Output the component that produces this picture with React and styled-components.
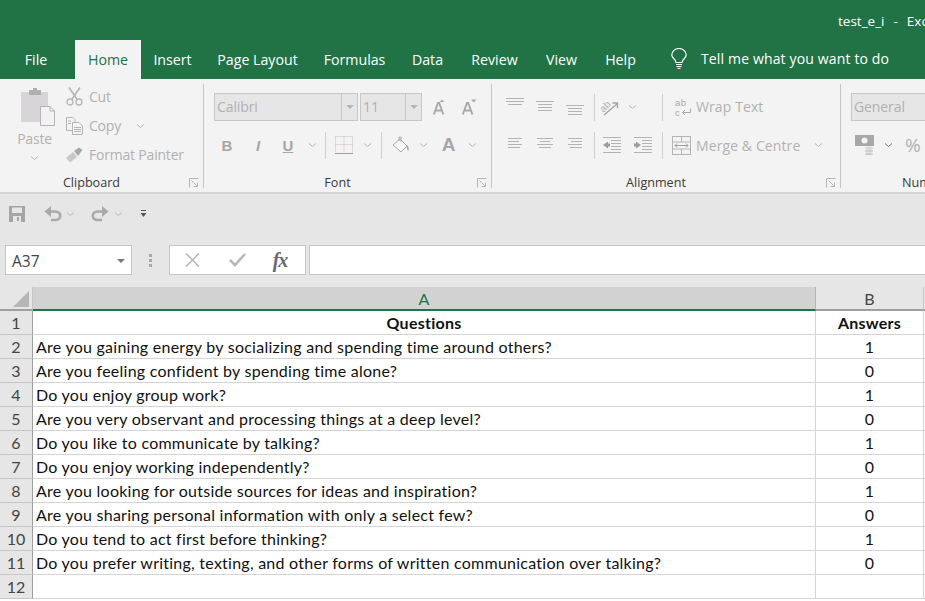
import styled, { createGlobalStyle } from "styled-components";

const GlobalStyle = createGlobalStyle`
    html, body {
        margin: 0;
        padding: 0;
        height: 100%;
        overflow: hidden;
        background: #e6e6e6;
    }
    * { box-sizing: border-box; }
`;

const UI_FONT = `"Open Sans", "Noto Sans", sans-serif`;
const CELL_FONT = `Lato, "Open Sans", sans-serif`;
const GREEN = "#217346";
const DIM = "#b1b1b1";

const Page = styled.div`
    width: 925px;
    height: 601px;
    overflow: hidden;
    display: flex;
    flex-direction: column;
    font-family: ${UI_FONT};
`;

/* title + tabs */
const TitleBar = styled.div`
    height: 40px;
    flex: none;
    background: ${GREEN};
    color: #fff;
    font-size: 13.5px;
    word-spacing: 1px;
    line-height: 43px;
    padding-left: 838px;
    white-space: pre;
    overflow: hidden;
`;

const TabBar = styled.div`
    height: 39px;
    flex: none;
    background: ${GREEN};
    display: flex;
    padding-left: ${(p) => p.$left}px;
`;

const Tab = styled.div`
    width: ${(p) => p.$w}px;
    flex: none;
    text-align: center;
    font-size: 14.2px;
    line-height: 40px;
    white-space: nowrap;
    color: ${(p) => (p.$active ? GREEN : "#fff")};
    background: ${(p) => (p.$active ? "#f3f3f3" : "transparent")};
`;

const TellMe = styled.div`
    display: flex;
    align-items: center;
    gap: 14px;
    margin-left: 21px;
    color: #fff;
    font-size: 14px;
    letter-spacing: 0.15px;
    height: 39px;
    padding-bottom: 3px;
`;

/* ribbon */
const Ribbon = styled.div`
    height: 115px;
    flex: none;
    background: #f3f3f3;
    border-bottom: 2px solid #d4d4d4;
    display: flex;
    padding-top: 5px;
    overflow: hidden;
`;

const Group = styled.div`
    position: relative;
    width: ${(p) => p.$w}px;
    flex: none;
    height: 104px;
    border-right: 1px solid #c6c6c6;
    padding-left: ${(p) => p.$pad || 0}px;
`;

const GroupBody = styled.div`
    height: 89px;
    display: flex;
`;

const GroupLabel = styled.div`
    height: 20px;
    margin-left: -${(p) => p.$pad || 0}px;
    padding-right: 20px;
    text-align: center;
    font-size: 12.6px;
    line-height: 20px;
    color: #3a3a3a;
    white-space: nowrap;
`;

const Launcher = styled.svg`
    position: absolute;
    right: 4px;
    bottom: 0;
    width: 10px;
    height: 10px;
`;

const PasteColumn = styled.div`
    width: 46px;
    margin-left: 13px;
    flex: none;
    display: flex;
    flex-direction: column;
    align-items: center;
    color: ${DIM};
    font-size: 14px;
    letter-spacing: -0.2px;
    padding-top: 4px;
    padding-left: 3px;
`;

const PasteLabel = styled.div`
    line-height: 18px;
    margin: 4px 0 7px -6px;
`;

const ClipList = styled.div`
    margin: -2px 0 0 7px;
    display: flex;
    flex-direction: column;
`;

const ClipRow = styled.div`
    height: 29px;
    flex: none;
    display: flex;
    align-items: center;
    gap: 6px;
    color: ${DIM};
    font-size: 14px;
    letter-spacing: -0.2px;
    white-space: nowrap;
`;

const IconBox = styled.div`
    width: ${(p) => p.$w}px;
    margin-left: ${(p) => p.$ml || 0}px;
    flex: none;
    display: flex;
    align-items: center;
    justify-content: center;
    color: ${DIM};
`;

const ChevronMark = styled.svg`
    width: 9px;
    height: 6px;
    flex: none;
    margin-left: ${(p) => p.$ml || 0}px;
`;

const Stack = styled.div`
    display: flex;
    flex-direction: column;
    gap: 10px;
    padding-top: 9px;
`;

const Row = styled.div`
    height: 28px;
    display: flex;
    align-items: center;
`;

const Combo = styled.div`
    width: ${(p) => p.$w}px;
    height: 28px;
    flex: none;
    display: flex;
    background: #e6e6e6;
    border: 1px solid #c6c6c6;
    margin-right: ${(p) => p.$mr || 0}px;
    color: ${DIM};
    font-size: 14px;
    letter-spacing: -0.1px;
    line-height: 26px;
    padding-left: 2px;
    overflow: hidden;
`;

const ComboText = styled.div`
    flex: 1;
    white-space: nowrap;
`;

const ComboArrow = styled.div`
    width: 16px;
    flex: none;
    border-left: 1px solid #c6c6c6;
    display: flex;
    align-items: center;
    justify-content: center;
`;

const Caret = styled.div`
    width: 0;
    height: 0;
    border-left: 4px solid transparent;
    border-right: 4px solid transparent;
    border-top: 4px solid ${(p) => p.$color || "#b5b5b5"};
`;

const VSep = styled.div`
    width: 1px;
    height: 27px;
    flex: none;
    background: #d0d0d0;
    margin-left: ${(p) => p.$left ?? 0}px;
`;

const BoldLetter = styled.div`
    width: ${(p) => p.$w}px;
    margin-left: ${(p) => p.$ml || 0}px;
    flex: none;
    text-align: center;
    color: #a6a6a6;
    font-family: "Liberation Sans", sans-serif;
    font-size: ${(p) => p.$size || 15}px;
    font-weight: 700;
    font-style: ${(p) => (p.$italic ? "italic" : "normal")};
    text-decoration: ${(p) => (p.$under ? "underline" : "none")};
`;

const DimLabel = styled.div`
    color: ${DIM};
    font-size: ${(p) => p.$size || 14}px;
    letter-spacing: 0.1px;
    white-space: nowrap;
    margin-left: ${(p) => p.$left || 0}px;
    padding-bottom: ${(p) => p.$raise || 0}px;
`;

/* quick access */
const QuickBar = styled.div`
    height: 42px;
    flex: none;
    display: flex;
    align-items: center;
    padding-left: 9px;
    padding-bottom: 2px;
`;

const UndoSvg = styled.svg`
    width: 18px;
    height: 16px;
    transform: ${(p) => (p.$flip ? "scaleX(-1)" : "none")};
`;

/* formula bar */
const FormulaBar = styled.div`
    height: 30px;
    flex: none;
    margin-top: 9px;
    display: flex;
    padding-left: 5px;
`;

const NameBox = styled.div`
    width: 127px;
    flex: none;
    background: #fff;
    border: 1px solid #c6c6c6;
    display: flex;
    align-items: center;
    justify-content: space-between;
    padding: 1px 6px 0;
    font-size: 15.5px;
    color: #444;
`;

const Grip = styled.div`
    width: 37px;
    flex: none;
    display: flex;
    flex-direction: column;
    align-items: center;
    justify-content: center;
    gap: 2px;
    span {
        width: 3px;
        height: 3px;
        background: #a8a8a8;
    }
`;

const FxBox = styled.div`
    width: 137px;
    flex: none;
    background: #fff;
    border: 1px solid #c6c6c6;
    display: flex;
    align-items: center;
`;

const FxGlyph = styled.div`
    font-family: "Liberation Serif", serif;
    font-style: italic;
    font-weight: 700;
    font-size: 20px;
    letter-spacing: -1px;
    color: #6a6a6a;
    width: 40px;
    text-align: center;
`;

const FormulaInput = styled.div`
    flex: 1;
    margin-left: 3px;
    background: #fff;
    border: 1px solid #c6c6c6;
    border-right: none;
`;

/* sheet */
const Sheet = styled.div`
    margin-top: 12px;
    display: grid;
    grid-template-columns: 33px 783px 108px 1fr;
    grid-auto-rows: 24px;
    font-family: ${CELL_FONT};
    font-variant-ligatures: none;
    flex: 1;
    background: #fff;
    overflow: hidden;
`;

const Corner = styled.div`
    background: #e6e6e6;
    border-right: 1px solid #c6c6c6;
    border-bottom: 2px solid #9f9f9f;
    display: flex;
    justify-content: flex-end;
    align-items: flex-end;
    padding: 0 3px 2px 0;
`;

const ColHead = styled.div`
    background: ${(p) => (p.$selected ? "#d2d2d2" : "#e6e6e6")};
    color: ${(p) => (p.$selected ? GREEN : "#444")};
    border-right: 1px solid ${(p) => (p.$selected ? "#b5b5b5" : "#c6c6c6")};
    border-bottom: 2px solid ${(p) => (p.$selected ? GREEN : "#9f9f9f")};
    text-align: center;
    font-size: 16px;
    line-height: 23px;
`;

const RowHead = styled.div`
    background: #e6e6e6;
    border-right: 1px solid #9f9f9f;
    border-bottom: 1px solid #c6c6c6;
    color: #444;
    font-size: 16px;
    line-height: 24px;
    text-align: center;
`;

const Cell = styled.div`
    border-right: 1px solid #d4d4d4;
    border-bottom: 1px solid #d4d4d4;
    color: #111;
    font-size: 16px;
    letter-spacing: 0.25px;
    line-height: 24px;
    white-space: nowrap;
    padding-left: ${(p) => (p.$center ? 0 : 3)}px;
    text-align: ${(p) => (p.$center ? "center" : "left")};
    font-weight: ${(p) => (p.$bold ? 700 : 400)};
`;

const Chevron = ({ ml = 0, color = "#b5b5b5" }) => (
    <ChevronMark $ml={ml} viewBox="0 0 9 6">
        <path d="M1 1.5 L4.5 4.5 L8 1.5" fill="none" stroke={color} strokeWidth="1" />
    </ChevronMark>
);

const LauncherIcon = () => (
    <Launcher viewBox="0 0 10 10">
        <path d="M0.5 9.5 V0.5 H9.5 M2.5 2.5 L8 8 M8.5 4.5 V8.5 H4.5" fill="none" stroke="#b5b5b5" />
    </Launcher>
);

const AlignIcon = ({ lines }) => (
    <svg width="19" height="20" viewBox="0 0 19 20">
        {lines.map(([y, x1, x2]) => (
            <line key={y} x1={x1} x2={x2} y1={y + 0.5} y2={y + 0.5} stroke="#b3b3b3" />
        ))}
    </svg>
);

// y, x1, x2 of each rule, measured from the 20px tall icon box
const alignTop = [[1, 0, 18], [4, 0, 18], [7, 2, 16]];
const alignMiddle = [[4, 0, 18], [7, 2, 16], [10, 2, 16], [13, 2, 16]];
const alignBottom = [[8, 0, 18], [11, 2, 16], [14, 2, 16], [17, 2, 16]];
const textLeft = [[3, 2, 16], [6, 2, 13], [9, 2, 16], [12, 2, 14]];
const textCenter = [[3, 1, 17], [6, 4, 14], [9, 1, 17], [12, 3, 15]];
const textRight = [[3, 2, 16], [6, 5, 16], [9, 2, 16], [12, 4, 16]];

const PasteIcon = () => (
    <svg width="34" height="38" viewBox="0 0 34 38">
        <rect x="0" y="4" width="27" height="30" rx="1" fill="#d8d5d8" />
        <path d="M8 4 V2 H12 V0 H16 V2 H20 V7 H8 Z" fill="#b0aeb0" />
        <path d="M19.5 18.5 H29 L33.5 23 V37.5 H19.5 Z" fill="#f3f1f4" stroke="#b5b3b5" />
        <path d="M29 18.5 V23 H33.5" fill="none" stroke="#b5b3b5" />
    </svg>
);

const CutIcon = () => (
    <svg width="17" height="19" viewBox="0 0 17 19">
        <path d="M3 0.5 L11 12 M14 0.5 L6 12" stroke="#b5b5b5" strokeWidth="1.6" fill="none" />
        <circle cx="4" cy="15" r="3" fill="none" stroke="#b5b5b5" strokeWidth="1.3" />
        <circle cx="13" cy="15" r="3" fill="none" stroke="#b5b5b5" strokeWidth="1.3" />
    </svg>
);

const CopyIcon = () => (
    <svg width="17" height="18" viewBox="0 0 17 18">
        <path d="M0.5 0.5 H7 L9 2.5 V13.5 H0.5 Z" fill="#f3f3f3" stroke="#b5b5b5" />
        <path d="M6.5 5.5 H13 L16.5 9 V17.5 H6.5 Z" fill="#f3f3f3" stroke="#b5b5b5" />
        <path d="M8 10.5 H15 M8 12.5 H15 M8 14.5 H15 M2 4 H5 M2 6.5 H5" stroke="#b5b5b5" />
    </svg>
);

const BrushIcon = () => (
    <svg width="17" height="16" viewBox="0 0 17 16">
        <path d="M0 11 L7 5 L11 10 L4 15.5 Z" fill="#c8c8c8" />
        <path d="M8 4 L13 0.5 L16.5 3 L12 9 Z" fill="#a8a8a8" />
    </svg>
);

const GrowIcon = ({ down }) => (
    <svg width="15" height="16" viewBox="0 0 15 16">
        <path d="M0.8 15.5 L5 4 H6.2 L10.4 15.5 M2.5 11.5 H8.7" fill="none" stroke="#a9a9a9" strokeWidth="1.9" />
        <path d={down ? "M9 0.5 H14.5 L11.75 3.5 Z" : "M6.5 3 L9 0.5 L11.5 3 Z"} fill="#a9a9a9" />
    </svg>
);

const BorderIcon = () => (
    <svg width="18" height="18" viewBox="0 0 18 18">
        <path d="M0.5 0.5 H17.5 V16.5 M0.5 0.5 V16.5 M9 0.5 V16.5 M0.5 8.5 H17.5" fill="none" stroke="#cdb8cd" strokeDasharray="1 1" />
        <path d="M0 17.5 H18" stroke="#9d9d9d" />
    </svg>
);

const BucketIcon = () => (
    <svg width="18" height="18" viewBox="0 0 18 18">
        <path d="M1 9 L8 3 L15 10 L9 16 Z" fill="#f7f7f7" stroke="#a8a8a8" />
        <path d="M7 5 V1 H9 V6" fill="none" stroke="#a8a8a8" />
        <path d="M15 9 Q18 12 16 15 Q14 12 15 9 Z" fill="#a8a8a8" />
    </svg>
);

const OrientIcon = () => (
    <svg width="20" height="18" viewBox="0 0 20 18">
        <text x="1" y="12" transform="rotate(-45 6 9)" fontFamily="Liberation Sans, sans-serif" fontSize="10" fill="#b0b0b0">ab</text>
        <path d="M5 17 L18 6 M13.5 5 H18.5 V10" fill="none" stroke="#a3a3a3" strokeWidth="1.3" />
    </svg>
);

const IndentIcon = ({ flip }) => (
    <svg width="18" height="16" viewBox="0 0 18 16">
        <path d="M0 0.5 H18 M8 3.5 H18 M8 6.5 H18 M8 9.5 H18 M8 12.5 H18 M0 15.5 H18" stroke="#b3b3b3" />
        <path d={flip ? "M0 8 L5 4.5 V6.5 H7 V9.5 H5 V11.5 Z" : "M7 8 L2 4.5 V6.5 H0 V9.5 H2 V11.5 Z"} fill="#9d9d9d" />
    </svg>
);

const WrapIcon = () => (
    <svg width="17" height="19" viewBox="0 0 17 19">
        <text x="0" y="8" fontFamily="Liberation Sans, sans-serif" fontSize="9.5" letterSpacing="0.5" fill="#a8a8a8">ab</text>
        <text x="0" y="18" fontFamily="Liberation Sans, sans-serif" fontSize="9.5" fill="#a8a8a8">c</text>
        <path d="M15.5 10.5 V14.5 H8 M10 12 L7.5 14.5 L10 17" fill="none" stroke="#a8a8a8" />
    </svg>
);

const MergeIcon = () => (
    <svg width="19" height="19" viewBox="0 0 19 19">
        <rect x="0.5" y="0.5" width="18" height="18" fill="none" stroke="#b5b5b5" />
        <path d="M0.5 6 H18.5 M0.5 13 H18.5 M9.5 0.5 V6 M9.5 13 V18.5" stroke="#b5b5b5" />
        <path d="M3 9.5 H16 M5 7.5 L3 9.5 L5 11.5 M14 7.5 L16 9.5 L14 11.5" fill="none" stroke="#9d9d9d" />
    </svg>
);

const CurrencyIcon = () => (
    <svg width="20" height="20" viewBox="0 0 20 20">
        <rect x="0" y="0" width="19" height="11" fill="#a8a8a8" />
        <circle cx="9.5" cy="5.5" r="3" fill="#f3f3f3" />
        <ellipse cx="14" cy="13" rx="4" ry="1.5" fill="#d8d8d8" />
        <ellipse cx="14" cy="16" rx="4" ry="1.5" fill="#d0d0d0" />
        <ellipse cx="14" cy="19" rx="4" ry="1" fill="#c8c8c8" />
    </svg>
);

const BulbIcon = () => (
    <svg width="16" height="21" viewBox="0 0 16 21">
        <path d="M5 14.5 C5 11 0.8 10.5 0.8 7 A7.2 6.5 0 0 1 15.2 7 C15.2 10.5 11 11 11 14.5 Z" fill="none" stroke="#fff" strokeWidth="1.2" />
        <path d="M5 16.5 H11 M5.5 18.5 H10.5 M6.5 20.3 H9.5" stroke="#fff" />
    </svg>
);

const SaveIcon = () => (
    <svg width="16" height="16" viewBox="0 0 16 16">
        <path d="M0 0 H16 V16 H0 Z" fill="#a5a5a5" />
        <rect x="3" y="1.5" width="10" height="5.5" fill="#e6e6e6" />
        <rect x="4" y="10" width="8" height="6" fill="#e6e6e6" />
        <rect x="8" y="11" width="2" height="4" fill="#a5a5a5" />
    </svg>
);

const UndoIcon = ({ flip }) => (
    <UndoSvg $flip={flip} viewBox="0 0 18 16">
        <path d="M2 5.5 H11 C18 5.5 18 14 11 14 H7" fill="none" stroke="#a9a9a9" strokeWidth="2.6" />
        <path d="M7 0 V11 L0.5 5.5 Z" fill="#a9a9a9" />
    </UndoSvg>
);

const CustomizeIcon = () => (
    <svg width="7" height="8" viewBox="0 0 7 8">
        <path d="M1 0.5 H6" stroke="#555" />
        <path d="M0.5 3 H6.5 L3.5 7 Z" fill="#555" />
    </svg>
);

const CrossIcon = () => (
    <svg width="15" height="14" viewBox="0 0 15 14">
        <path d="M1 0.5 L14 13.5 M14 0.5 L1 13.5" stroke="#b8b8b8" strokeWidth="1.6" />
    </svg>
);

const CheckIcon = () => (
    <svg width="17" height="14" viewBox="0 0 17 14">
        <path d="M1 7 L6 12 L16 1" fill="none" stroke="#b8b8b8" strokeWidth="2.6" />
    </svg>
);

const questions = [
    ["Are you gaining energy by socializing and spending time around others?", 1],
    ["Are you feeling confident by spending time alone?", 0],
    ["Do you enjoy group work?", 1],
    ["Are you very observant and processing things at a deep level?", 0],
    ["Do you like to communicate by talking?", 1],
    ["Do you enjoy working independently?", 0],
    ["Are you looking for outside sources for ideas and inspiration?", 1],
    ["Are you sharing personal information with only a select few?", 0],
    ["Do you tend to act first before thinking?", 1],
    ["Do you prefer writing, texting, and other forms of written communication over talking?", 0],
];

const tabs = [
    ["Insert", 63],
    ["Page Layout", 107],
    ["Formulas", 87],
    ["Data", 59],
    ["Review", 75],
    ["View", 59],
    ["Help", 59],
];

const SheetRow = ({ n, text, answer }) => (
    <>
        <RowHead>{n}</RowHead>
        <Cell>{text}</Cell>
        <Cell $center>{answer}</Cell>
        <Cell />
    </>
);

const App = () => {
    return (
        <Page>
            <GlobalStyle />
            <TitleBar>{"test_e_i  -  Excel"}</TitleBar>
            <TabBar $left={10}>
                <Tab $w={52}>File</Tab>
                <Tab $w={13} />
                <Tab $w={66} $active>Home</Tab>
                {tabs.map(([name, w]) => (
                    <Tab key={name} $w={w}>{name}</Tab>
                ))}
                <TellMe>
                    <BulbIcon />
                    <span>Tell me what you want to do</span>
                </TellMe>
            </TabBar>

            <Ribbon>
                <Group $w={204}>
                    <GroupBody>
                        <PasteColumn>
                            <PasteIcon />
                            <PasteLabel>Paste</PasteLabel>
                            <Chevron ml={-6} />
                        </PasteColumn>
                        <ClipList>
                            <ClipRow><IconBox $w={17}><CutIcon /></IconBox>Cut</ClipRow>
                            <ClipRow><IconBox $w={17}><CopyIcon /></IconBox>Copy<Chevron ml={9} /></ClipRow>
                            <ClipRow><IconBox $w={17}><BrushIcon /></IconBox>Format Painter</ClipRow>
                        </ClipList>
                    </GroupBody>
                    <GroupLabel>Clipboard</GroupLabel>
                    <LauncherIcon />
                </Group>

                <Group $w={288} $pad={10}>
                    <GroupBody>
                        <Stack>
                            <Row>
                                <Combo $w={144} $mr={2}>
                                    <ComboText>Calibri</ComboText>
                                    <ComboArrow><Caret /></ComboArrow>
                                </Combo>
                                <Combo $w={62}>
                                    <ComboText>11</ComboText>
                                    <ComboArrow><Caret /></ComboArrow>
                                </Combo>
                                <IconBox $w={15} $ml={11}><GrowIcon /></IconBox>
                                <IconBox $w={15} $ml={14}><GrowIcon down /></IconBox>
                            </Row>
                            <Row>
                                <BoldLetter $w={26}>B</BoldLetter>
                                <BoldLetter $w={36} $italic>I</BoldLetter>
                                <BoldLetter $w={24} $under>U</BoldLetter>
                                <IconBox $w={24}><Chevron /></IconBox>
                                <VSep $left={1} />
                                <IconBox $w={36}><BorderIcon /></IconBox>
                                <IconBox $w={10}><Chevron /></IconBox>
                                <VSep $left={9} />
                                <IconBox $w={37}><BucketIcon /></IconBox>
                                <IconBox $w={8}><Chevron /></IconBox>
                                <BoldLetter $w={39} $ml={2} $size={19}>A</BoldLetter>
                                <IconBox $w={8}><Chevron /></IconBox>
                            </Row>
                        </Stack>
                    </GroupBody>
                    <GroupLabel $pad={10}>Font</GroupLabel>
                    <LauncherIcon />
                </Group>

                <Group $w={349} $pad={14}>
                    <GroupBody>
                        <Stack>
                            <Row>
                                <IconBox $w={19}><AlignIcon lines={alignTop} /></IconBox>
                                <IconBox $w={19} $ml={11}><AlignIcon lines={alignMiddle} /></IconBox>
                                <IconBox $w={19} $ml={11}><AlignIcon lines={alignBottom} /></IconBox>
                                <VSep $left={9} />
                                <IconBox $w={27}><OrientIcon /></IconBox>
                                <IconBox $w={9} $ml={6}><Chevron /></IconBox>
                                <VSep $left={25} />
                                <IconBox $w={17} $ml={12}><WrapIcon /></IconBox>
                                <DimLabel $left={4} $raise={2}>Wrap Text</DimLabel>
                            </Row>
                            <Row>
                                <IconBox $w={19}><AlignIcon lines={textLeft} /></IconBox>
                                <IconBox $w={19} $ml={11}><AlignIcon lines={textCenter} /></IconBox>
                                <IconBox $w={19} $ml={11}><AlignIcon lines={textRight} /></IconBox>
                                <VSep $left={9} />
                                <IconBox $w={18} $ml={8}><IndentIcon flip /></IconBox>
                                <IconBox $w={18} $ml={13}><IndentIcon /></IconBox>
                                <VSep $left={10} />
                                <IconBox $w={19} $ml={9}><MergeIcon /></IconBox>
                                <DimLabel $left={5}>Merge &amp; Centre</DimLabel>
                                <IconBox $w={9} $ml={14}><Chevron /></IconBox>
                            </Row>
                        </Stack>
                    </GroupBody>
                    <GroupLabel $pad={14}>Alignment</GroupLabel>
                    <LauncherIcon />
                </Group>

                <Group $w={192} $pad={10}>
                    <GroupBody>
                        <Stack>
                            <Row>
                                <Combo $w={150}><ComboText>General</ComboText></Combo>
                            </Row>
                            <Row>
                                <IconBox $w={20} $ml={4}><CurrencyIcon /></IconBox>
                                <IconBox $w={9} $ml={9}><Chevron color="#777" /></IconBox>
                                <DimLabel $left={12} $size={19}>%</DimLabel>
                            </Row>
                        </Stack>
                    </GroupBody>
                    <GroupLabel $pad={10}>Number</GroupLabel>
                </Group>
            </Ribbon>

            <QuickBar>
                <IconBox $w={16}><SaveIcon /></IconBox>
                <IconBox $w={18} $ml={19}><UndoIcon /></IconBox>
                <IconBox $w={9} $ml={4}><Chevron /></IconBox>
                <IconBox $w={18} $ml={16}><UndoIcon flip /></IconBox>
                <IconBox $w={9} $ml={5}><Chevron /></IconBox>
                <IconBox $w={7} $ml={17}><CustomizeIcon /></IconBox>
            </QuickBar>

            <FormulaBar>
                <NameBox>
                    A37
                    <Caret $color="#777" />
                </NameBox>
                <Grip><span /><span /><span /></Grip>
                <FxBox>
                    <IconBox $w={44}><CrossIcon /></IconBox>
                    <IconBox $w={46}><CheckIcon /></IconBox>
                    <FxGlyph>fx</FxGlyph>
                </FxBox>
                <FormulaInput />
            </FormulaBar>

            <Sheet>
                <Corner>
                    <svg width="16" height="16" viewBox="0 0 16 16">
                        <path d="M16 0 V16 H0 Z" fill="#b5b5b5" />
                    </svg>
                </Corner>
                <ColHead $selected>A</ColHead>
                <ColHead>B</ColHead>
                <ColHead />

                <RowHead>1</RowHead>
                <Cell $center $bold>Questions</Cell>
                <Cell $center $bold>Answers</Cell>
                <Cell />

                {questions.map(([text, answer], i) => (
                    <SheetRow key={text} n={i + 2} text={text} answer={answer} />
                ))}

                <RowHead>12</RowHead>
                <Cell />
                <Cell />
                <Cell />
            </Sheet>
        </Page>
    );
};

export default App;
